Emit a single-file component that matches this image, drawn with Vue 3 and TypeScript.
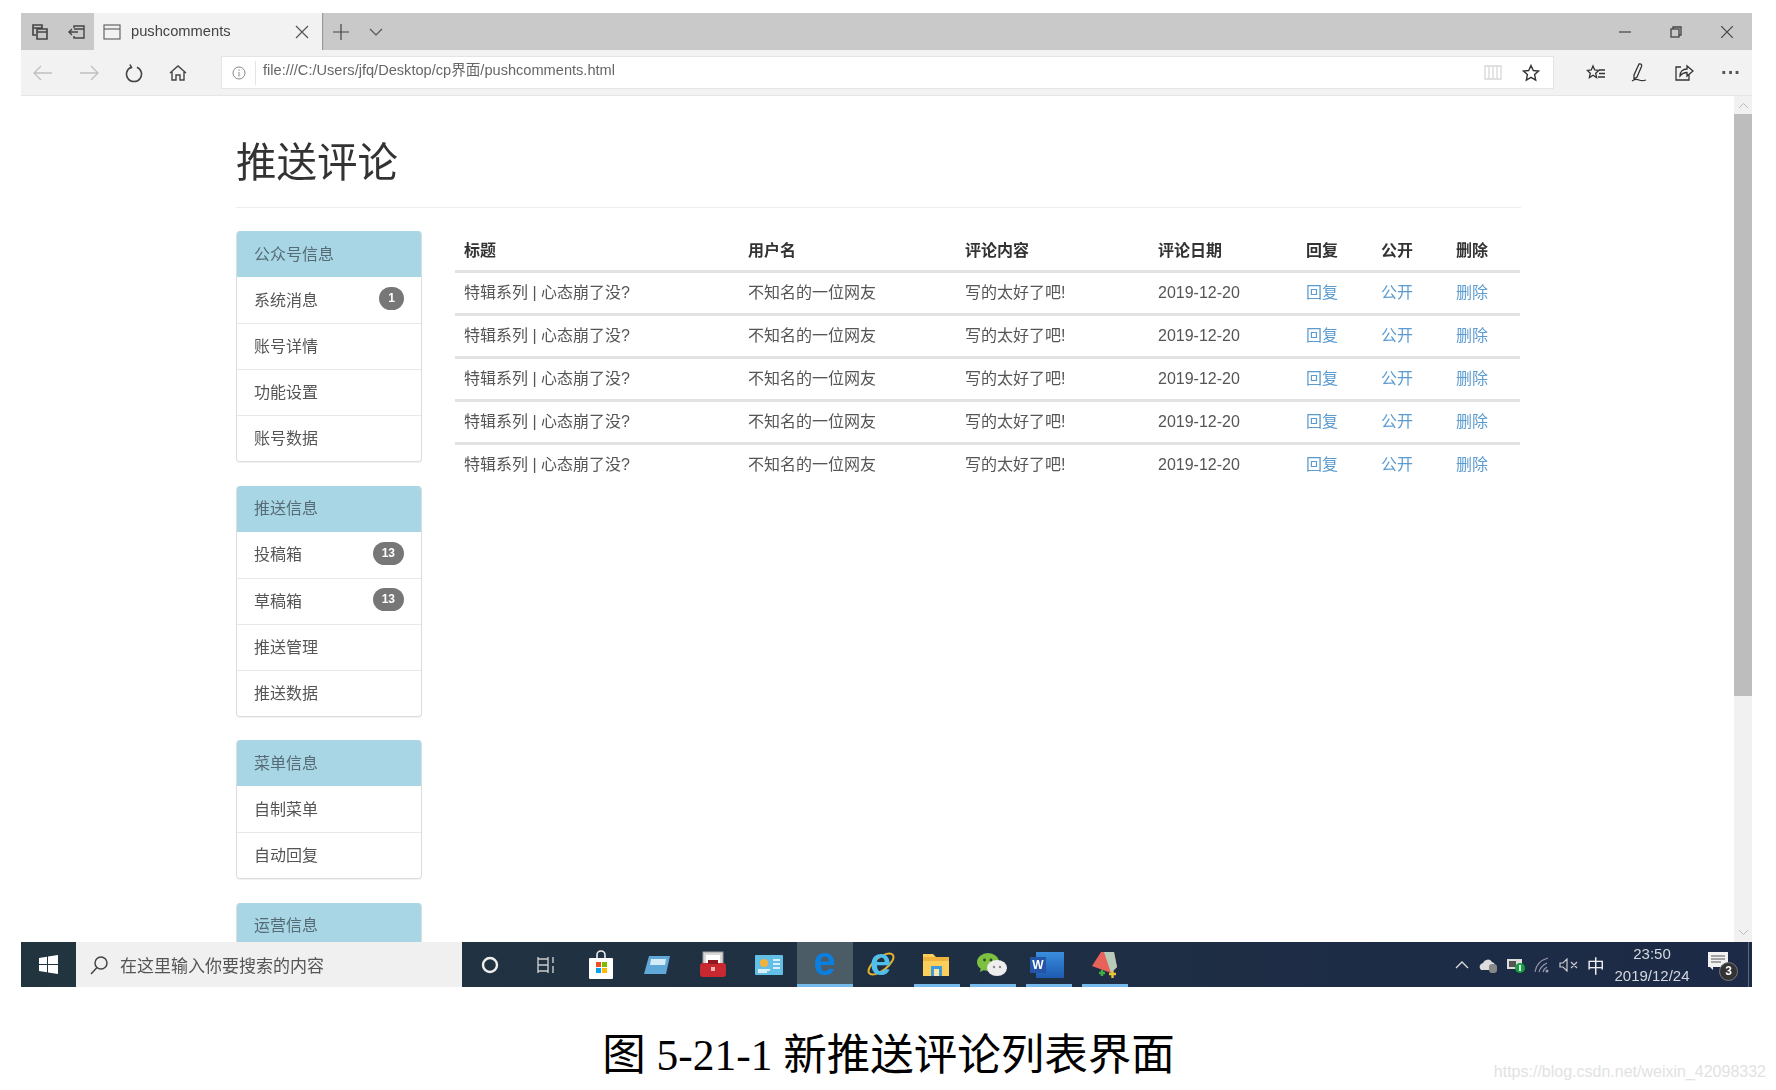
<template>
  <div class="page">
    <div class="window">
      <!-- tab strip -->
      <div class="tabbar">
        <span class="tb-btn">
          <svg width="18" height="18" viewBox="0 0 18 18" fill="none" stroke="#444" stroke-width="1.6"><path d="M2 2h9v3H2zM2 5v7h3M6 6h10v10H6zM6 9h10" /></svg>
        </span>
        <span class="tb-btn small">
          <svg width="18" height="18" viewBox="0 0 18 18" fill="none" stroke="#444" stroke-width="1.4"><path d="M6 5V3h10v12H6v-2M6 6h10M1 9h9M4 6L1 9l3 3" /></svg>
        </span>
        <div class="tab">
          <svg width="18" height="16" viewBox="0 0 18 16" fill="none" stroke="#666" stroke-width="1.2"><rect x="1" y="1" width="16" height="14" /><path d="M1 5h16" /></svg>
          <span class="tab-title">pushcomments</span>
          <svg class="tab-x" width="14" height="14" viewBox="0 0 14 14" stroke="#555" stroke-width="1.2"><path d="M1 1l12 12M13 1L1 13" /></svg>
        </div>
        <span class="new-tab">
          <svg width="16" height="16" viewBox="0 0 16 16" stroke="#444" stroke-width="1.2"><path d="M8 0v16M0 8h16" /></svg>
        </span>
        <span class="tab-list">
          <svg width="14" height="8" viewBox="0 0 14 8" fill="none" stroke="#555" stroke-width="1.2"><path d="M1 1l6 6 6-6" /></svg>
        </span>
        <div class="win-ctrl">
          <svg width="12" height="12" viewBox="0 0 12 12" stroke="#444" stroke-width="1.2"><path d="M0 6h12" /></svg>
          <svg width="12" height="12" viewBox="0 0 12 12" fill="none" stroke="#444" stroke-width="1.3"><rect x="1" y="3" width="8" height="8" /><path d="M3 3V1h8v8H9" /></svg>
          <svg width="12" height="12" viewBox="0 0 12 12" stroke="#444" stroke-width="1.2"><path d="M0 0l12 12M12 0L0 12" /></svg>
        </div>
      </div>

      <!-- address toolbar -->
      <div class="toolbar">
        <div class="nav">
          <svg width="20" height="16" viewBox="0 0 20 16" fill="none" stroke="#c0c0c0" stroke-width="1.3"><path d="M19 8H2M8 1L1 8l7 7" /></svg>
          <svg width="20" height="16" viewBox="0 0 20 16" fill="none" stroke="#c0c0c0" stroke-width="1.3"><path d="M1 8h17M12 1l7 7-7 7" /></svg>
          <svg width="18" height="20" viewBox="0 0 18 20" fill="none" stroke="#444" stroke-width="1.6"><path d="M6 4.200a7.500 7.500 0 1 0 6 0M5 1.500l1.500 3-3 1.200" /></svg>
          <svg width="18" height="18" viewBox="0 0 18 18" fill="none" stroke="#444" stroke-width="1.4"><path d="M1 9l8-7 8 7M3 8v8h4v-5h4v5h4V8" /></svg>
        </div>
        <div class="address">
          <svg class="info" width="14" height="14" viewBox="0 0 14 14" fill="none" stroke="#888"><circle cx="7" cy="7" r="6" /><path d="M7 6v4.500M7 3.500v1.500" /></svg>
          <span class="addr-sep"></span>
          <span class="url">file:///C:/Users/jfq/Desktop/cp界面/pushcomments.html</span>
          <svg class="book" width="18" height="15" viewBox="0 0 18 15" fill="none" stroke="#d8d8d8" stroke-width="1.3"><path d="M1 1h16v13H1zM9 1v13M5 1v13M13 1v13" /></svg>
          <svg class="star" width="18" height="18" viewBox="0 0 18 18" fill="none" stroke="#333" stroke-width="1.4"><path d="M9 1.500l2.300 5 5.200.6-3.900 3.500 1.100 5.400L9 13.300 4.300 16l1.100-5.400L1.500 7.100l5.200-.6z" /></svg>
        </div>
        <div class="tools">
          <svg width="20" height="18" viewBox="0 0 20 18" fill="none" stroke="#333" stroke-width="1.3"><path d="M7 2l1.700 4 4 .4-3 2.800.9 4.300L7 11.200 3.400 13.500l.9-4.300-3-2.800 4-.4zM13 6h6M13 9.500h6M12 13h7" /></svg>
          <svg width="20" height="20" viewBox="0 0 20 20" fill="none" stroke="#333" stroke-width="1.3"><path d="M9 1c2-.5 3 .5 2.500 2.500L7 14l-3 2 0-4zM2 18c3-2 5-2 7-1s4 1 7 0" /></svg>
          <svg width="20" height="18" viewBox="0 0 20 18" fill="none" stroke="#333" stroke-width="1.3"><path d="M7 3H2v13h13v-5M6 12c0-5 3-7 7-7V2l6 5-6 5V8.500c-3 0-5 1-7 3.500z" /></svg>
          <span class="dots">···</span>
        </div>
      </div>

      <!-- browser viewport -->
      <div class="viewport">
        <div class="content">
          <h1 class="title">推送评论</h1>
          <div class="columns">
            <aside class="sidebar">
              <section v-for="group in menu" :key="group.name" class="panel">
                <div class="panel-head">{{ group.name }}</div>
                <div v-for="item in group.items" :key="item.label" class="panel-row">
                  <span>{{ item.label }}</span>
                  <span v-if="item.badge" class="badge">{{ item.badge }}</span>
                </div>
              </section>
            </aside>
            <table class="comments">
              <colgroup>
                <col v-for="w in colWidths" :key="w.id" :style="{ width: w.px + 'px' }" />
              </colgroup>
              <thead>
                <tr>
                  <th v-for="h in headers" :key="h">{{ h }}</th>
                </tr>
              </thead>
              <tbody>
                <tr v-for="n in 5" :key="n">
                  <td>特辑系列 | 心态崩了没?</td>
                  <td>不知名的一位网友</td>
                  <td>写的太好了吧!</td>
                  <td>2019-12-20</td>
                  <td><a href="#">回复</a></td>
                  <td><a href="#">公开</a></td>
                  <td><a href="#">删除</a></td>
                </tr>
              </tbody>
            </table>
          </div>
        </div>
        <div class="scrollbar">
          <svg class="arrow" width="11" height="7" viewBox="0 0 11 7" fill="none" stroke="#bbb"><path d="M1 6l4.500-4.500L10 6" /></svg>
          <div class="thumb"></div>
          <svg class="arrow down" width="11" height="7" viewBox="0 0 11 7" fill="none" stroke="#bbb"><path d="M1 1l4.500 4.500L10 1" /></svg>
        </div>
      </div>

      <!-- windows taskbar -->
      <div class="taskbar">
        <div class="start">
          <svg width="19" height="19" viewBox="0 0 19 19" fill="#fff"><path d="M0 3l8-1.200V9H0zM9 1.600L19 0v9H9zM0 10h8v7.200L0 16zM9 10h10v9L9 17.400z" /></svg>
        </div>
        <div class="search">
          <svg width="20" height="20" viewBox="0 0 20 20" fill="none" stroke="#444" stroke-width="1.5"><circle cx="12" cy="8" r="6" /><path d="M8 12.500L2 19" /></svg>
          <span>在这里输入你要搜索的内容</span>
        </div>
        <div class="apps">
          <span class="app">
            <svg width="20" height="20" viewBox="0 0 20 20" fill="none" stroke="#eee" stroke-width="2.400"><circle cx="10" cy="10" r="7" /></svg>
          </span>
          <span class="app">
            <svg width="20" height="20" viewBox="0 0 20 20" fill="none" stroke="#ccc" stroke-width="1.400"><path d="M2 2v16M2 4h10M2 16h10M12 2v16M2 10h10M17 2v6M17 11v7" /></svg>
          </span>
          <span class="app">
            <svg width="26" height="30" viewBox="0 0 26 30"><path d="M9 8V5a4 4 0 0 1 8 0v3" fill="none" stroke="#eee" stroke-width="1.600" /><rect x="1" y="8" width="24" height="21" rx="1" fill="#fff" /><rect x="8" y="12" width="5" height="5" fill="#f25022" /><rect x="14" y="12" width="5" height="5" fill="#7fba00" /><rect x="8" y="18" width="5" height="5" fill="#00a4ef" /><rect x="14" y="18" width="5" height="5" fill="#ffb900" /></svg>
          </span>
          <span class="app">
            <svg width="26" height="20" viewBox="0 0 26 20"><path d="M5 1h21l-4 18H0z" fill="#5fa8d8" /><path d="M7 4h15l-1 6H6z" fill="#d5ebf7" /></svg>
          </span>
          <span class="app">
            <svg width="28" height="28" viewBox="0 0 28 28"><rect x="4" y="1" width="20" height="16" fill="#d8d8d8" stroke="#999" /><rect x="7" y="4" width="14" height="8" fill="#fff" /><rect x="1" y="12" width="26" height="14" rx="3" fill="#c8282f" /><rect x="9" y="9" width="10" height="4" fill="#8e1a20" /><rect x="12" y="16" width="4" height="4" fill="#f3b3b3" /></svg>
          </span>
          <span class="app">
            <svg width="28" height="20" viewBox="0 0 28 20"><rect width="28" height="20" rx="1" fill="#64bfe6" /><circle cx="9" cy="8" r="4" fill="#f3b13c" /><path d="M3 15h12M3 17h9M18 5h7M18 9h7M18 13h7" stroke="#fff" stroke-width="1.500" /></svg>
          </span>
          <span class="app active">
            <span class="edge-e">e</span>
          </span>
          <span class="app">
            <svg class="ie-ring" width="32" height="32" viewBox="0 0 32 32" fill="none"><ellipse cx="16" cy="16" rx="15" ry="6.500" transform="rotate(-38 16 16)" stroke="#e5b32c" stroke-width="2" /></svg>
            <span class="ie-e">e</span>
          </span>
          <span class="app running">
            <svg width="28" height="24" viewBox="0 0 28 24"><path d="M1 1h10l3 3h13v19H1z" fill="#fbcf5a" /><path d="M1 4h26v4H1z" fill="#f2b33d" /><rect x="9" y="13" width="11" height="10" fill="#3f9adb" /><rect x="12" y="16" width="5" height="7" fill="#fbe6a7" /></svg>
          </span>
          <span class="app running">
            <svg width="30" height="26" viewBox="0 0 30 26"><ellipse cx="11" cy="10" rx="11" ry="9" fill="#7cc142" /><path d="M4 15l-1 5 6-3z" fill="#7cc142" /><ellipse cx="20" cy="16" rx="10" ry="8" fill="#eee" /><circle cx="7.500" cy="8" r="1.400" fill="#2c4a1e" /><circle cx="14" cy="8" r="1.400" fill="#2c4a1e" /><circle cx="17" cy="15" r="1.200" fill="#888" /><circle cx="23" cy="15" r="1.200" fill="#888" /></svg>
          </span>
          <span class="app running split">
            <span class="word">
              <span class="word-w">W</span>
            </span>
          </span>
          <span class="app running">
            <svg width="28" height="28" viewBox="0 0 28 28"><path d="M11 1h13l3 15-6 6L2 15z" fill="#e9625a" /><path d="M14 1h10l3 15-6 6z" fill="#b6cbb9" /><path d="M9 22h6M12 19v6" stroke="#3fae3f" stroke-width="2.400" /><path d="M19 23h7M22.500 20v7" stroke="#e8c536" stroke-width="2.400" /></svg>
          </span>
        </div>
        <div class="tray">
          <span class="tray-i"><svg width="14" height="8" viewBox="0 0 14 8" fill="none" stroke="#ddd" stroke-width="1.300"><path d="M1 7l6-6 6 6" /></svg></span>
          <span class="tray-i"><svg width="20" height="18" viewBox="0 0 20 18"><path d="M2 14a4 4 0 0 1 2-7 5 5 0 0 1 9-1 4 4 0 0 1 3 3v5z" fill="#ddd" /><rect x="10" y="8" width="8" height="9" rx="3" fill="#888" /></svg></span>
          <span class="tray-i"><svg width="20" height="18" viewBox="0 0 20 18"><rect x="1" y="3" width="15" height="10" fill="#ddd" /><rect x="3" y="5" width="7" height="6" fill="#555" /><circle cx="14" cy="12" r="5" fill="#18a03c" /><rect x="13" y="9" width="2" height="6" fill="#dff" /></svg></span>
          <span class="tray-i"><svg width="18" height="16" viewBox="0 0 18 16" fill="none" stroke="#99a" stroke-width="1.100"><path d="M2 15C3 8 8 3 15 1M6 15c1-4 4-7 8-9M10 15c.5-2 2-4 4-5" /><circle cx="14" cy="14" r="1" fill="#ccc" /></svg></span>
          <span class="tray-i"><svg width="20" height="14" viewBox="0 0 20 14" fill="none" stroke="#ccc" stroke-width="1.200"><path d="M1 5h3l4-4v12L4 9H1zM12 4l6 6M18 4l-6 6" /></svg></span>
          <span class="tray-i ime">中</span>
          <div class="clock">
            <span>23:50</span>
            <span>2019/12/24</span>
          </div>
          <span class="notify">
            <svg width="22" height="20" viewBox="0 0 22 20"><path d="M1 1h20v15H6v3l-3-3H1z" fill="#f2f2f2" /><path d="M4 5h14M4 8h14M4 11h10" stroke="#555" /></svg>
            <span class="notify-count">3</span>
          </span>
          <span class="show-desktop"></span>
        </div>
      </div>
    </div>

    <p class="caption">图 5-21-1 新推送评论列表界面</p>
    <span class="watermark">https://blog.csdn.net/weixin_42098332</span>
  </div>
</template>

<script setup lang="ts">
interface MenuItem {
  label: string
  badge?: number
}

interface MenuGroup {
  name: string
  items: MenuItem[]
}

const menu: MenuGroup[] = [
  {
    name: '公众号信息',
    items: [
      { label: '系统消息', badge: 1 },
      { label: '账号详情' },
      { label: '功能设置' },
      { label: '账号数据' },
    ],
  },
  {
    name: '推送信息',
    items: [
      { label: '投稿箱', badge: 13 },
      { label: '草稿箱', badge: 13 },
      { label: '推送管理' },
      { label: '推送数据' },
    ],
  },
  {
    name: '菜单信息',
    items: [{ label: '自制菜单' }, { label: '自动回复' }],
  },
  {
    name: '运营信息',
    items: [],
  },
]

const headers = ['标题', '用户名', '评论内容', '评论日期', '回复', '公开', '删除']

const colWidths = [284, 217, 193, 148, 75, 75, 73].map((px, id) => ({ id, px }))
</script>

<style>
body {
  margin: 0;
  background: #fff;
}
</style>

<style scoped>
.page {
  position: relative;
  height: 1090px;
  padding: 13px 24px 0 21px;
  box-sizing: border-box;
  overflow: hidden;
  font-family: "Liberation Sans", "Noto Sans CJK SC", sans-serif;
}

.window {
  height: 974px;
  display: flex;
  flex-direction: column;
  overflow: hidden;
  filter: blur(0.75px);
}

.tabbar {
  height: 37px;
  flex: none;
  display: flex;
  align-items: center;
  background: #c9c9c9;
}

.tb-btn {
  width: 37px;
  display: flex;
  justify-content: center;
}

.tab {
  width: 228px;
  height: 37px;
  margin-left: -1px;
  padding-left: 9px;
  box-sizing: border-box;
  display: flex;
  align-items: center;
  background: #f2f2f2;
  box-shadow: 1px 0 1px #999;
}

.tab-title {
  margin-left: 10px;
  font-size: 14.7px;
  color: #444;
  position: relative;
  top: -1px;
}

.tab-x {
  margin-left: auto;
  margin-right: 13px;
}

.new-tab {
  margin-left: 11px;
  display: flex;
}

.tab-list {
  margin-left: 20px;
  display: flex;
}

.win-ctrl {
  margin-left: auto;
  margin-right: 19px;
  display: flex;
  gap: 39px;
}

.toolbar {
  height: 45px;
  flex: none;
  display: flex;
  align-items: center;
  background: #f2f2f2;
  border-bottom: 1px solid #e6e6e6;
}

.nav {
  width: 200px;
  padding-left: 12px;
  box-sizing: border-box;
  display: flex;
  align-items: center;
  gap: 26px;
}

.address {
  width: 1333px;
  height: 33px;
  box-sizing: border-box;
  display: flex;
  align-items: center;
  background: #fff;
  border: 1px solid #e4e4e4;
}

.info {
  margin-left: 10px;
}

.addr-sep {
  width: 1px;
  height: 24px;
  margin: 0 7px 0 9px;
  background: #e4e4e4;
}

.url {
  font-size: 14.6px;
  color: #666;
  position: relative;
  top: -4px;
}

.book {
  margin-left: auto;
}

.star {
  margin-left: 20px;
  margin-right: 13px;
}

.tools {
  flex: 1;
  padding-left: 32px;
  display: flex;
  align-items: center;
  gap: 24px;
}

.dots {
  margin-left: 3px;
  font-size: 20px;
  font-weight: 700;
  color: #555;
}

.viewport {
  flex: 1;
  min-height: 0;
  display: flex;
  background: #fff;
}

.content {
  flex: 1;
  min-width: 0;
  overflow: hidden;
  padding-left: 215px;
  padding-right: 213px;
}

.title {
  margin: 0;
  height: 112px;
  box-sizing: border-box;
  padding-top: 42px;
  font-size: 40.500px;
  line-height: 50px;
  font-weight: 400;
  color: #333;
  border-bottom: 1px solid #eee;
}

.columns {
  display: flex;
  align-items: flex-start;
  padding-top: 23px;
}

.sidebar {
  width: 186px;
  flex: none;
  margin-right: 33px;
}

.panel {
  margin-bottom: 23.500px;
  border: 1px solid #ddd;
  border-top: none;
  border-radius: 4px;
  box-shadow: 0 1px 1px rgba(0, 0, 0, 0.06);
  overflow: hidden;
  font-size: 16px;
  color: #555;
}

.panel-head {
  height: 46px;
  margin: 0 -1px;
  padding: 0 0 3px 18px;
  box-sizing: border-box;
  display: flex;
  align-items: center;
  background: #a9d6e5;
  color: #556b75;
}

.panel-row {
  height: 46px;
  padding: 0 17px 3px;
  box-sizing: border-box;
  display: flex;
  align-items: center;
  justify-content: space-between;
  border-top: 1px solid #e8e8e8;
}

.panel-head + .panel-row {
  border-top: none;
}

.badge {
  min-width: 7px;
  padding: 0 9px;
  font-size: 12px;
  font-weight: 700;
  line-height: 23px;
  color: #fff;
  background: #777;
  border-radius: 12px;
  text-align: center;
}

.comments {
  width: 1065px;
  flex: none;
  table-layout: fixed;
  border-collapse: collapse;
  font-size: 16px;
  line-height: 22px;
  color: #555;
  text-align: left;
}

.comments th {
  height: 40px;
  padding: 2px 0 0 9px;
  box-sizing: border-box;
  font-weight: 700;
  color: #333;
  border-bottom: 3px solid #e2e2e2;
}

.comments td {
  height: 43px;
  padding: 0 0 0 9px;
  box-sizing: border-box;
  border-top: 3px solid #e2e2e2;
}

.comments tbody tr:first-child td {
  border-top: none;
}

.comments a {
  color: #5b9bd0;
  text-decoration: none;
}

.scrollbar {
  width: 18px;
  flex: none;
  display: flex;
  flex-direction: column;
  align-items: center;
  background: #f1f1f1;
}

.arrow {
  margin: 6px 0 5px;
  flex: none;
}

.thumb {
  width: 100%;
  height: 582px;
  flex: none;
  background: #bdbdbd;
}

.arrow.down {
  margin: auto 0 6px;
}

.taskbar {
  height: 45px;
  flex: none;
  display: flex;
  align-items: stretch;
  background: linear-gradient(90deg, #22353f, #1c2a47);
  color: #ddd;
}

.start {
  width: 55px;
  flex: none;
  display: flex;
  align-items: center;
  justify-content: center;
}

.search {
  width: 386px;
  flex: none;
  padding-left: 13px;
  box-sizing: border-box;
  display: flex;
  align-items: center;
  gap: 11px;
  background: #f0f0f0;
  font-size: 17px;
  color: #555;
}

.apps {
  display: flex;
}

.app {
  position: relative;
  width: 55.8px;
  display: flex;
  align-items: center;
  justify-content: center;
}

.app.active {
  background: #4c5c66;
  border-bottom: 3px solid #76b9ed;
  box-sizing: border-box;
}

.app.running::after {
  content: "";
  position: absolute;
  left: 6px;
  right: 4px;
  bottom: 0;
  height: 3px;
  background: #76b9ed;
}

.edge-e {
  font-size: 40px;
  font-weight: 700;
  line-height: 38px;
  color: #0a7fe0;
  position: relative;
  top: -2px;
}

.ie-e {
  font-size: 38px;
  font-weight: 700;
  line-height: 36px;
  color: #4fc0ee;
  position: relative;
  top: -3px;
}

.ie-ring {
  position: absolute;
  left: 12px;
  top: 6px;
}

.word {
  position: relative;
  width: 28px;
  height: 26px;
  background: linear-gradient(#3a8ede, #1d5ab0);
  margin-left: 4px;
}

.word-w {
  position: absolute;
  left: -6px;
  top: 5px;
  width: 16px;
  height: 16px;
  background: #2455a8;
  color: #fff;
  font-size: 12px;
  font-weight: 700;
  line-height: 16px;
  text-align: center;
}

.tray {
  margin-left: auto;
  display: flex;
  align-items: center;
}

.tray-i {
  width: 26.7px;
  display: flex;
  justify-content: center;
}

.ime {
  font-size: 18px;
  color: #eee;
}

.clock {
  width: 84px;
  margin-left: 1px;
  display: flex;
  flex-direction: column;
  align-items: center;
  font-size: 15px;
  line-height: 22px;
  color: #d4d8de;
}

.notify {
  position: relative;
  margin-left: 13px;
  width: 30px;
  height: 28px;
  margin-right: 11px;
}

.notify-count {
  position: absolute;
  right: -1px;
  bottom: -2px;
  width: 17px;
  height: 17px;
  border-radius: 50%;
  background: #333;
  border: 1px solid #777;
  color: #fff;
  font-size: 12px;
  font-weight: 700;
  line-height: 17px;
  text-align: center;
}

.show-desktop {
  width: 1px;
  height: 100%;
  margin-right: 3px;
  background: #5a6a80;
}

.caption {
  margin: 43px 0 0;
  font-family: "Liberation Serif", "Noto Sans CJK SC", serif;
  font-size: 43.500px;
  line-height: 50px;
  color: #000;
  text-align: center;
  white-space: nowrap;
  position: relative;
  left: 2px;
}

.watermark {
  position: absolute;
  right: 10px;
  bottom: 9px;
  font-size: 16px;
  color: #e2e2e2;
}
</style>
